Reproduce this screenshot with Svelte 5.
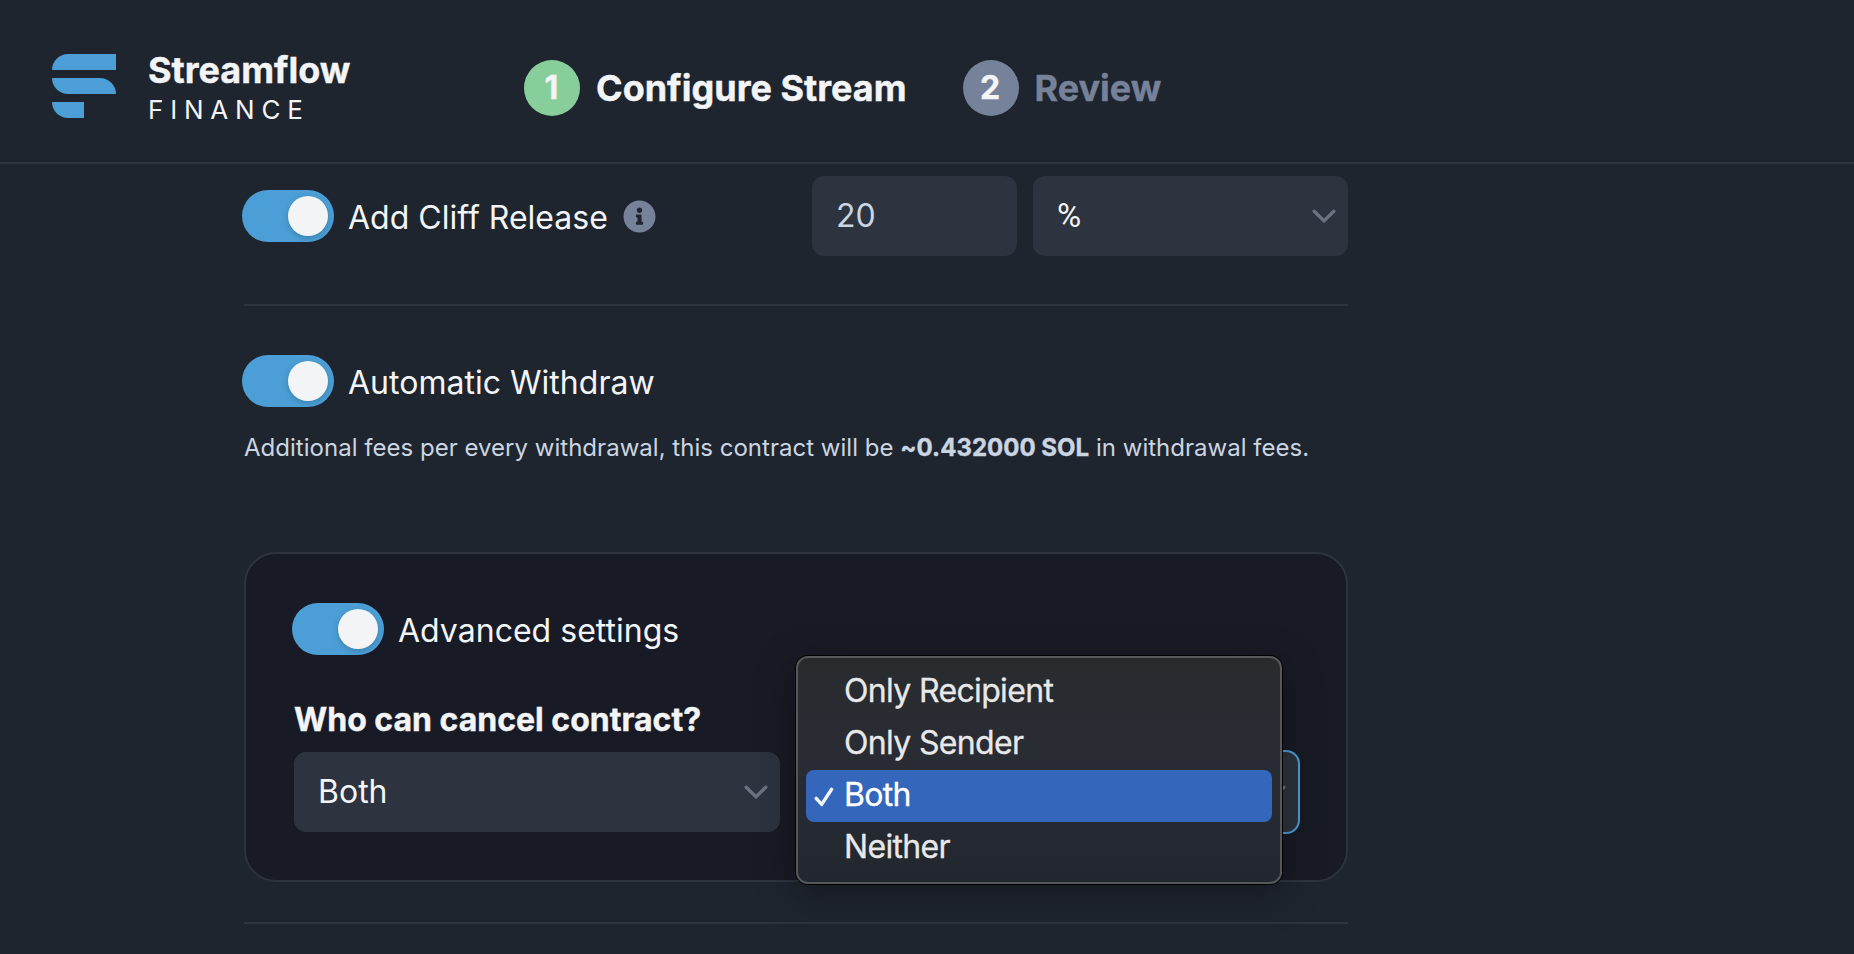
<script>
  const cancelOptions = ['Only Recipient', 'Only Sender', 'Both', 'Neither'];
  let selected = $state('Both');
</script>

{#snippet toggle()}
  <span class="toggle"><span class="knob"></span></span>
{/snippet}

{#snippet chevron()}
  <svg class="chevron" width="24" height="14" viewBox="0 0 24 14" fill="none">
    <path d="M2.200 2.200 12 11.900l9.800-9.700" stroke="#6b7280" stroke-width="3.4" stroke-linecap="round" stroke-linejoin="round" />
  </svg>
{/snippet}

<div class="page">
  <header>
    <svg class="logo" width="64" height="64" viewBox="0 0 64 64" fill="#4b9fd6">
      <path d="M16 0H64V16H0A16 16 0 0 1 16 0Z" />
      <path d="M0 24H48A16 16 0 0 1 64 40H16A16 16 0 0 1 0 24Z" />
      <path d="M0 48H32V64H16A16 16 0 0 1 0 48Z" />
    </svg>
    <div class="brand">
      <span class="name">Streamflow</span>
      <span class="sub">FINANCE</span>
    </div>
    <nav>
      <div class="step active"><span class="num">1</span><span class="title">Configure Stream</span></div>
      <div class="step"><span class="num">2</span><span class="title">Review</span></div>
    </nav>
  </header>

  <main>
    <section class="cliff">
      {@render toggle()}
      <span class="label">Add Cliff Release</span>
      <svg class="info" width="33" height="33" viewBox="0 0 512 512">
        <path fill="#768299" d="M256 8C119.043 8 8 119.083 8 256c0 136.997 111.043 248 248 248s248-111.003 248-248C504 119.083 392.957 8 256 8zm0 110c23.196 0 42 18.804 42 42s-18.804 42-42 42-42-18.804-42-42 18.804-42 42-42zm56 254c0 6.627-5.373 12-12 12h-88c-6.627 0-12-5.373-12-12v-24c0-6.627 5.373-12 12-12h12v-64h-12c-6.627 0-12-5.373-12-12v-24c0-6.627 5.373-12 12-12h64c6.627 0 12 5.373 12 12v100h12c6.627 0 12 5.373 12 12v24z" />
      </svg>
      <div class="fields">
        <div class="field amount">20</div>
        <div class="field unit"><span class="percent">%</span>{@render chevron()}</div>
      </div>
    </section>
    <hr />
    <section class="auto">
      {@render toggle()}
      <span class="label">Automatic Withdraw</span>
    </section>
    <p class="fees">Additional fees per every withdrawal, this contract will be <b>~0.432000 SOL</b> in withdrawal fees.</p>

    <div class="card">
      <div class="adv">
        {@render toggle()}
        <span class="label">Advanced settings</span>
      </div>
      <div class="columns">
        <div class="column">
          <div class="question">Who can cancel contract?</div>
          <div class="field"><span>{selected}</span>{@render chevron()}</div>
        </div>
        <div class="column">
          <div class="question"></div>
          <div class="field focused">{@render chevron()}</div>
          <div class="menu">
            {#each cancelOptions as option}
              <div class="option" class:chosen={option === selected}>
                <span class="tick">
                  {#if option === selected}
                    <svg width="20" height="20" viewBox="0 0 20 20" fill="none">
                      <path d="M2.200 11.400 7.700 17.400 17.600 2.300" stroke="#f3f5fa" stroke-width="3.400" stroke-linecap="round" stroke-linejoin="round" />
                    </svg>
                  {/if}
                </span>
                <span class="text">{option}</span>
              </div>
            {/each}
          </div>
        </div>
      </div>
    </div>
    <hr class="last" />
  </main>
</div>

<style>
  :global(body) { margin: 0; background: #1f252f; }
  .page {
    width: 1854px;
    height: 954px;
    overflow: hidden;
    box-sizing: border-box;
    background: #1f252f;
    color: #f3f4f6;
    font-family: Inter, sans-serif;
    font-size: 32px;
  }
  header {
    display: flex;
    align-items: flex-start;
    height: 164px;
    box-sizing: border-box;
    padding-left: 52px;
    border-bottom: 2px solid #2d333f;
  }
  .logo { margin-top: 54px; flex: none; }
  .brand { width: 375px; margin: 48px 0 0 32px; display: flex; flex-direction: column; }
  .name, .step, .question, .fees b { -webkit-text-stroke: 0.4px currentColor; }
  .name { font-size: 36px; line-height: 44px; font-weight: 700; }
  .sub { font-size: 26px; line-height: 36px; letter-spacing: 6.8px; }
  nav { display: flex; gap: 56px; margin: 60px 0 0 1px; }
  .step { display: flex; align-items: center; color: #768299; font-size: 36px; font-weight: 700; }
  .active { color: #f3f4f6; }
  .num {
    width: 56px; height: 56px; line-height: 56px; border-radius: 50%; margin-right: 16px;
    box-sizing: border-box; padding-right: 1px;
    background: #768299; color: #f3f4f6; text-align: center; font-size: 32px;
  }
  .active .num { background: #88ce9b; }
  main { width: 1104px; margin-left: 244px; }
  section, .adv { display: flex; align-items: center; }
  .toggle {
    width: 92px; height: 52px; border-radius: 26px; background: #4b9fd6; flex: none;
    margin-left: -2px; box-sizing: border-box; padding: 6px; display: flex; justify-content: flex-end;
  }
  .knob { width: 40px; height: 40px; border-radius: 50%; background: #f3f4f6; box-shadow: 0 2px 6px rgba(0, 0, 0, .2); }
  .label { margin-left: 14px; line-height: 50px; padding-top: 4px; letter-spacing: 0.02px; white-space: nowrap; }
  .cliff { height: 80px; padding-top: 12px; }
  .info { margin-left: 15px; }
  .fields { display: flex; gap: 16px; margin-left: auto; }
  .field {
    height: 80px; box-sizing: border-box; border-radius: 12px; background: #2d333f;
    padding: 0 12px 2px 24px; display: flex; align-items: center;
  }
  .chevron { margin: 2px 0 0 auto; }
  .amount { width: 205px; color: #cbd5e1; }
  .unit { width: 315px; }
  .percent { font-family: Roboto, sans-serif; font-size: 33px; }
  hr { border: 0; height: 2px; background: #2d333f; margin: 48px 0 0; }
  .last { margin-top: 40px; }
  .auto { margin-top: 49px; height: 52px; }
  .fees { margin: 21px 0 0; font-size: 24px; line-height: 40px; letter-spacing: 0.02px; color: #cbd5e1; white-space: nowrap; }
  .card {
    height: 330px; margin-top: 84px; box-sizing: border-box; border: 2px solid #2d333f;
    border-radius: 32px; background: #181b25; padding: 49px 48px 0;
  }
  .adv { height: 52px; }
  .columns { display: flex; gap: 32px; margin-top: 45px; }
  .column { width: 486px; position: relative; }
  .question { height: 52px; line-height: 40px; font-weight: 700; white-space: nowrap; }
  .focused { box-shadow: 0 0 0 2px #4b9fd6; }
  .menu {
    position: absolute; left: -16px; top: -44px; width: 486px; height: 228px; box-sizing: border-box;
    border: 2px solid #555759; border-radius: 12px; padding: 8px;
    background: linear-gradient(#282b2e, #292c33 40%, #22272f);
    box-shadow: 0 0 0 1px #000, 0 10px 40px rgba(0, 0, 0, .35);
  }
  .option { height: 52px; display: flex; align-items: center; border-radius: 8px; color: #e8e8e8; }
  .chosen { background: #3467bc; color: #fff; }
  .tick { width: 38px; display: flex; box-sizing: border-box; padding: 2px 0 0 8px; }
  .text { line-height: 40px; padding-bottom: 2px; letter-spacing: -0.66px; -webkit-text-stroke: 0.3px currentColor; }
</style>
